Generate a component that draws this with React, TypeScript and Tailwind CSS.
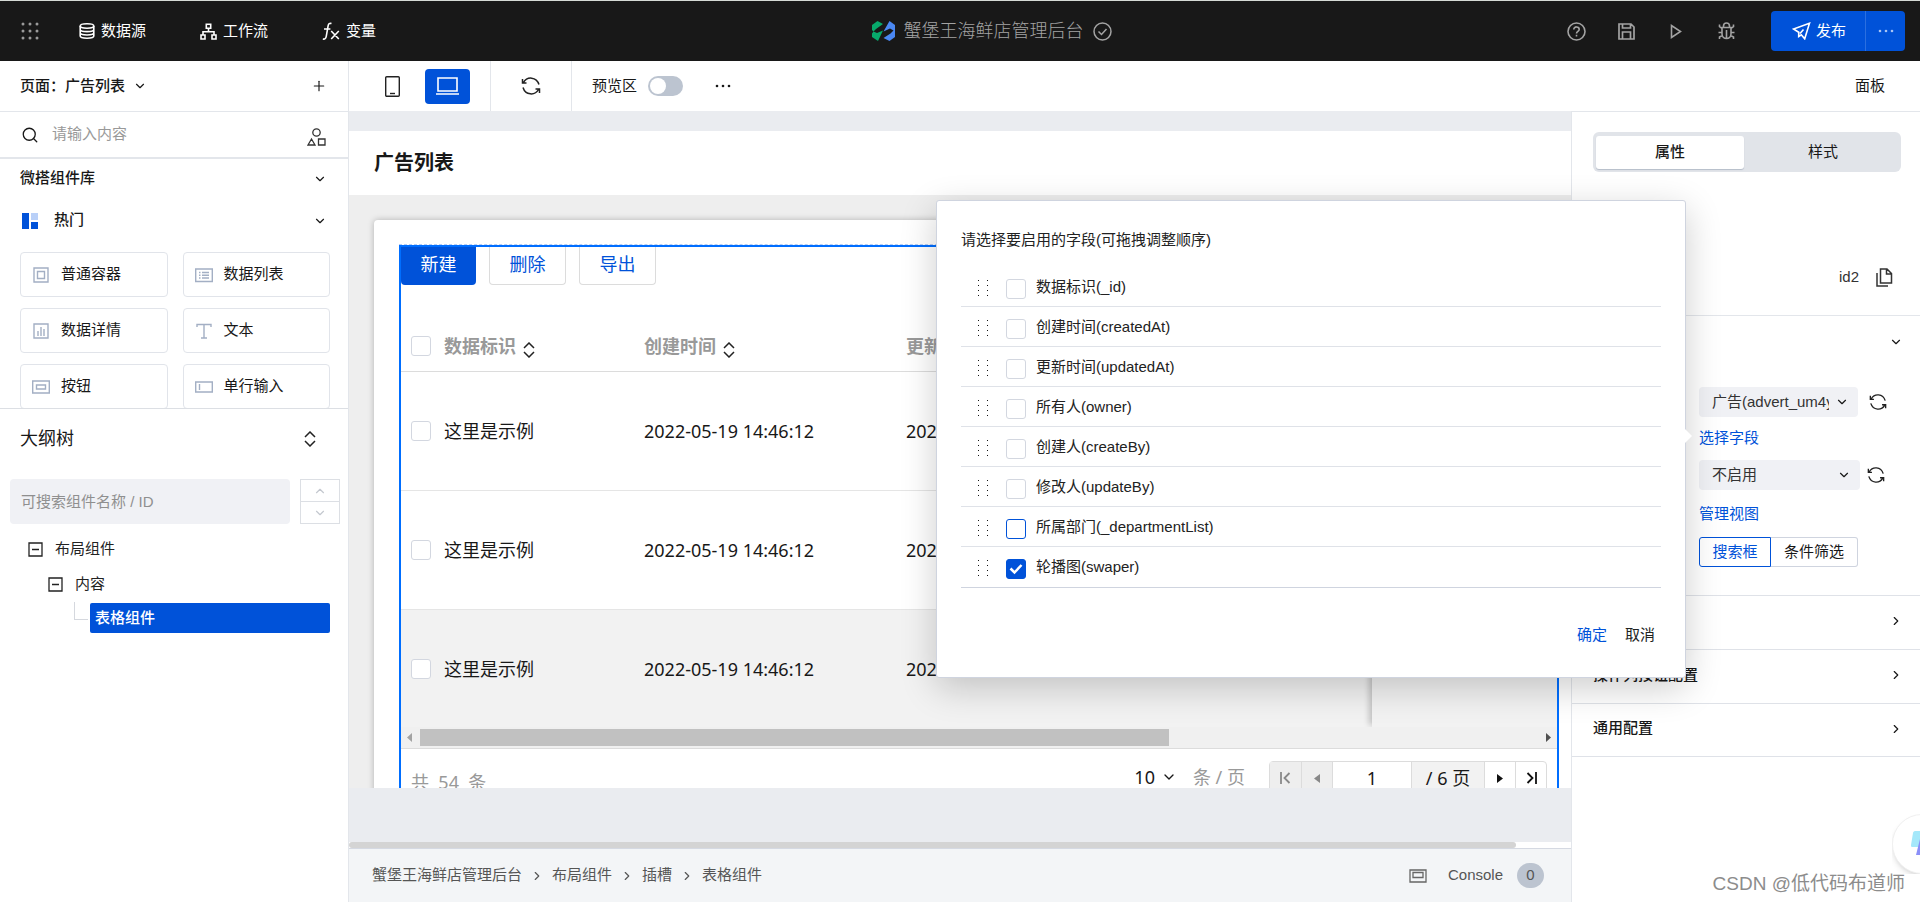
import React, { useState } from 'react';
import { ChevronDown, ChevronRight, ChevronUp, Plus, Search } from 'lucide-react';

const fields = [
  { id: '_id', label: '数据标识(_id)', enabled: false },
  { id: 'createdAt', label: '创建时间(createdAt)', enabled: false },
  { id: 'updatedAt', label: '更新时间(updatedAt)', enabled: false },
  { id: 'owner', label: '所有人(owner)', enabled: false },
  { id: 'createBy', label: '创建人(createBy)', enabled: false },
  { id: 'updateBy', label: '修改人(updateBy)', enabled: false },
  { id: '_departmentList', label: '所属部门(_departmentList)', enabled: false, hovered: true },
  { id: 'swaper', label: '轮播图(swaper)', enabled: true },
];

const rows = [
  { id: 1, name: '这里是示例', createdAt: '2022-05-19 14:46:12', updatedAt: '2022-05-19 14:46:12' },
  { id: 2, name: '这里是示例', createdAt: '2022-05-19 14:46:12', updatedAt: '2022-05-19 14:46:12' },
  { id: 3, name: '这里是示例', createdAt: '2022-05-19 14:46:12', updatedAt: '2022-05-19 14:46:12' },
];

const breadcrumbs = ['蟹堡王海鲜店管理后台', '布局组件', '插槽', '表格组件'];

/* ---------- icons ---------- */

function GridDotsIcon() {
  return (
    <svg width="18" height="18" viewBox="0 0 18 18" fill="#9a9a9a">
      {[2, 9, 16].map((y) => [2, 9, 16].map((x) => <circle key={`${x}-${y}`} cx={x} cy={y} r="1.5" />))}
    </svg>
  );
}

function DatabaseIcon() {
  return (
    <svg width="16" height="16" viewBox="0 0 16 16" fill="none" stroke="#fff" strokeWidth="1.6">
      <ellipse cx="8" cy="3" rx="6.8" ry="2.2" />
      <path d="M1.2 3v10c0 1.2 3 2.2 6.8 2.2s6.8-1 6.8-2.2V3M1.2 6.4c0 1.2 3 2.2 6.8 2.2s6.8-1 6.8-2.2M1.2 9.8c0 1.2 3 2.2 6.8 2.2s6.8-1 6.8-2.2" />
    </svg>
  );
}

function FlowIcon() {
  return (
    <svg width="17" height="17" viewBox="0 0 17 17" fill="none" stroke="#fff" strokeWidth="1.6">
      <path d="M6.3 1.3h4.4v4H6.3zM1 12h4v4H1zM12 12h4v4h-4zM8.5 5.3v3.4M3 12V8.7h11V12" />
    </svg>
  );
}

function FxIcon() {
  return (
    <svg width="18" height="19" viewBox="0 0 18 19" fill="none" stroke="#fff" strokeWidth="1.6">
      <path d="M9.5 1.5C7.6 1 6.5 1.8 6.1 3.8L4.2 14.6c-.4 2-1.4 2.8-3.4 2.4M2 7h6.4M9.2 9l7.6 8M16.8 9l-7.6 8" />
    </svg>
  );
}

function LogoIcon() {
  return (
    <svg width="23" height="20" viewBox="0 0 23 20">
      <path d="M0 4 5.500 0l5.500 3-7 5-2.500 2.500 3.500 1.500 6-2.500L6 20l-6-4v-3.500l1.500-2L0 9z" fill="#07a86b" />
      <path d="m17.500 0 5.500 4v12l-5.500 4-6-3 7-4.500 3-3-3.500-2-6.500 3z" fill="#4a87f2" />
    </svg>
  );
}

function CheckCircleIcon() {
  return (
    <svg width="19" height="19" viewBox="0 0 19 19" fill="none" stroke="#a3a3a3" strokeWidth="1.5">
      <circle cx="9.500" cy="9.500" r="8.500" />
      <path d="m5.500 9.500 3 3 5-5.500" />
    </svg>
  );
}

function HelpIcon() {
  return (
    <svg width="19" height="19" viewBox="0 0 19 19" fill="none" stroke="#a3a3a3" strokeWidth="1.6">
      <circle cx="9.500" cy="9.500" r="8.500" />
      <path d="M6.800 7.400c0-3.400 5.400-3.200 5.400 0 0 1.800-2.700 2-2.700 4M9.500 12.700v1.800" />
    </svg>
  );
}

function SaveIcon() {
  return (
    <svg width="17" height="17" viewBox="0 0 17 17" fill="none" stroke="#a3a3a3" strokeWidth="1.700">
      <path d="M1 1h12l3 3v12H1zM4.500 1v4h8V1M4.500 16V9h8v7" />
    </svg>
  );
}

function PlayIcon() {
  return (
    <svg width="12" height="15" viewBox="0 0 12 15" fill="none" stroke="#a3a3a3" strokeWidth="1.600">
      <path d="M1.500 1.500v12l9-6z" />
    </svg>
  );
}

function BugIcon() {
  return (
    <svg width="17" height="18" viewBox="0 0 17 18" fill="none" stroke="#a3a3a3" strokeWidth="1.600">
      <path d="M5.500 5V4c0-4 6-4 6 0v1M4 5.500h9V12c0 6-9 6-9 0zM8.500 8v8M4 6.500 1.500 4.500V2.500M13 6.500l2.500-2V2.500M4 10.500H.5M13 10.500h3.500M4.500 13.500l-3 1.500v2M12.500 13.500l3 1.500v2" />
    </svg>
  );
}

function SendIcon() {
  return (
    <svg width="19" height="18" viewBox="0 0 19 18" fill="none" stroke="#fff" strokeWidth="1.600">
      <path d="M17.500 1.200 1.500 7l5.200 3.300v4.200l2.600-1.700 3.400 4zM8 11.500l3.500-4" />
    </svg>
  );
}

function MoreIcon({ className }: { className?: string }) {
  return (
    <svg className={className} width="16" height="4" viewBox="0 0 16 4" fill="currentColor">
      <circle cx="2" cy="2" r="1.300" />
      <circle cx="8" cy="2" r="1.300" />
      <circle cx="14" cy="2" r="1.300" />
    </svg>
  );
}

function RefreshIcon({ size }: { size: number }) {
  return (
    <svg width={size} height={size} viewBox="0 0 20 20" fill="none" stroke="#222" strokeWidth="1.500">
      <path d="M2.500 6.500C6 .2 15.500.5 18 8.500M17.500 13.500C14 19.800 4.500 19.500 2 11.500M1.500 3v4h4M18.500 17v-4h-4" />
    </svg>
  );
}

function ShapesIcon() {
  return (
    <svg width="19" height="18" viewBox="0 0 19 18" fill="none" stroke="#333" strokeWidth="1.300">
      <circle cx="9.500" cy="4.500" r="3.700" />
      <path d="M4.500 11 8 17H1zM11.500 11H18v6h-6.500z" />
    </svg>
  );
}

function SortIcon() {
  return (
    <svg width="12" height="16" viewBox="0 0 12 16" fill="none" stroke="#222" strokeWidth="1.500">
      <path d="m1 6 5-5 5 5M1 10l5 5 5-5" />
    </svg>
  );
}

function DragIcon() {
  return (
    <svg width="12" height="18" viewBox="0 0 12 18" fill="#111" shapeRendering="crispEdges">
      {[1, 6, 11, 16].map((y) => (
        <path key={y} d={`M1 ${y}h1v1H1zM10 ${y}h1v1h-1z`} />
      ))}
    </svg>
  );
}

function CopyIcon() {
  return (
    <svg width="17" height="19" viewBox="0 0 17 19" fill="none" stroke="#333" strokeWidth="1.500">
      <path d="M4.500 1H11l4.500 4.500V15h-11zM10.500 1v5h5M1 5v13h11" />
    </svg>
  );
}

function TreeBoxIcon() {
  return (
    <svg width="15" height="15" viewBox="0 0 15 15" fill="none" stroke="#222" strokeWidth="1.300">
      <path d="M1 1h13v13H1zM4 7.500h7" />
    </svg>
  );
}

const componentIcons: Record<string, React.ReactNode> = {
  普通容器: <path d="M2 1h14v14H2zM5.500 4.500h7v7h-7z" />,
  数据列表: <path d="M.7 2h16.600v12.500H.7zM4 5.500h1.500M7 5.500h7M4 8.300h1.500M7 8.300h7M4 11h1.500M7 11h7" />,
  数据详情: <path d="M2 1h14v14H2zM6 8v5M9 4v9M12 6v7" />,
  文本: <path d="M2 4V1.500h14V4M9 1.500V15M6 15h6" />,
  按钮: <path d="M.7 2h16.600v12H.7zM4.500 6h9v4h-9z" />,
  单行输入: <path d="M.7 3h16.600v10H.7zM4.500 5v6" />,
};

/* ---------- shared controls ---------- */

function Checkbox({ label, id, checked = false, hovered = false }: { label?: string; id: string; checked?: boolean; hovered?: boolean }) {
  const [on, setOn] = useState(checked);
  return (
    <span className="relative block size-5">
      <input
        type="checkbox"
        id={id}
        aria-label={label}
        checked={on}
        onChange={(e) => setOn(e.target.checked)}
        className={`block size-5 appearance-none rounded-[3px] border bg-white checked:border-[#0052d9] checked:bg-[#0052d9] ${hovered ? 'border-[#0052d9]' : 'border-[#d3d7e0]'}`}
      />
      {on && (
        <svg className="pointer-events-none absolute inset-0" width="20" height="20" viewBox="0 0 20 20" fill="none" stroke="#fff" strokeWidth="2.500">
          <path d="m4.500 9.500 4 4 7-7.500" />
        </svg>
      )}
    </span>
  );
}

function Header() {
  return (
    <header className="flex h-[61px] shrink-0 items-center border-t border-[#d5dad5] bg-[#181818] pl-[21px] pr-[15px] text-white">
      <nav className="flex w-[411px] shrink-0 items-center">
        <button aria-label="应用">
          <GridDotsIcon />
        </button>
        <a href="#data" className="ml-10 flex items-center gap-[6px]">
          <DatabaseIcon />
          数据源
        </a>
        <a href="#flow" className="ml-[54px] flex items-center gap-[6px]">
          <FlowIcon />
          工作流
        </a>
        <a href="#vars" className="ml-[54px] flex items-center gap-[6px]">
          <FxIcon />
          变量
        </a>
      </nav>
      <div className="flex flex-1 items-center justify-center gap-[9px]">
        <LogoIcon />
        <h1 className="text-lg font-light text-[#a3a3a3]">蟹堡王海鲜店管理后台</h1>
        <CheckCircleIcon />
      </div>
      <div className="flex shrink-0 items-center">
        <button aria-label="帮助" className="flex w-[50px] justify-center"><HelpIcon /></button>
        <button aria-label="保存" className="flex w-[50px] justify-center"><SaveIcon /></button>
        <button aria-label="预览" className="flex w-[50px] justify-center"><PlayIcon /></button>
        <button aria-label="调试" className="flex w-[50px] justify-center"><BugIcon /></button>
        <div className="ml-5 flex h-10 overflow-hidden rounded-[4px] bg-[#0052d9]">
          <button className="flex w-[94px] items-center justify-center gap-[5px] pl-[2px]">
            <SendIcon />
            发布
          </button>
          <button aria-label="更多" className="flex w-10 items-center justify-center border-l border-[#2b6fe0] text-[#a9c5f5]">
            <MoreIcon />
          </button>
        </div>
      </div>
    </header>
  );
}

function LeftPanel() {
  return (
    <aside className="flex w-[349px] shrink-0 flex-col border-r border-[#e3e6eb] bg-white">
      <div className="flex h-[51px] shrink-0 items-center border-b border-[#e3e6eb] pl-5 pr-[21px]">
        <button className="flex items-center gap-2 font-medium">
          页面：广告列表
          <ChevronDown size={14} />
        </button>
        <button aria-label="新建页面" className="ml-auto">
          <Plus size={16} strokeWidth={1.75} />
        </button>
      </div>
      <div className="flex h-[47px] shrink-0 items-center border-b-2 border-[#e3e6eb] pl-[21px] pr-[22px]">
        <Search size={18} strokeWidth={1.75} />
        <input aria-label="搜索组件" placeholder="请输入内容" className="ml-[13px] min-w-0 flex-1 outline-none placeholder:text-[#999]" />
        <button aria-label="组件分类" className="pt-1">
          <ShapesIcon />
        </button>
      </div>

      <section className="h-[250px] shrink-0 overflow-hidden border-b border-[#dcdfe4]">
        <button className="flex h-[39px] w-full items-center justify-between pl-5 pr-[21px] font-medium">
          微搭组件库
          <ChevronDown size={14} />
        </button>
        <button className="flex h-[45px] w-full items-center pl-[22px] pr-[21px] font-medium">
          <svg width="16" height="16" viewBox="0 0 16 16">
            <path d="M0 0h7v16H0z" fill="#0052d9" />
            <path d="M9 0h7v7H9z" fill="#b9d0f8" />
            <path d="M9 9h7v7H9z" fill="#0052d9" />
          </svg>
          <span className="ml-4">热门</span>
          <ChevronDown size={14} className="ml-auto" />
        </button>
        <div className="mt-[9px] grid grid-cols-2 gap-x-[15px] gap-y-[11px] pl-5 pr-[18px]">
          {Object.keys(componentIcons).map((name) => (
            <button key={name} className="flex h-[45px] items-center gap-[11px] rounded-[4px] border border-[#e1e4ea] pl-[11px]">
              <svg width="18" height="16" viewBox="0 0 18 16" fill="none" stroke="#a3afc4" strokeWidth="1.400">
                {componentIcons[name]}
              </svg>
              {name}
            </button>
          ))}
        </div>
      </section>

      <section className="flex-1 overflow-hidden">
        <div className="flex h-[60px] items-center justify-between pl-5 pr-8">
          <h2 className="text-lg">大纲树</h2>
          <button aria-label="展开">
            <SortIcon />
          </button>
        </div>
        <div className="mt-[10px] flex gap-[10px] pl-[10px] pr-2">
          <input aria-label="搜索大纲" placeholder="可搜索组件名称 / ID" className="h-[45px] min-w-0 flex-1 rounded-[4px] bg-[#f0f1f5] px-[11px] outline-none placeholder:text-[#8f8f8f]" />
          <div className="flex h-[45px] w-10 flex-col border border-[#dcdfe4] text-[#c4c8cf]">
            <button aria-label="上一个" className="flex flex-1 items-center justify-center border-b border-[#dcdfe4]">
              <ChevronUp size={14} />
            </button>
            <button aria-label="下一个" className="flex flex-1 items-center justify-center">
              <ChevronDown size={14} />
            </button>
          </div>
        </div>
        <ul className="mt-2 pr-[18px] text-[#222]">
          <li className="flex h-[35px] items-center gap-3 pl-7">
            <TreeBoxIcon />
            布局组件
          </li>
          <li className="flex h-[35px] items-center gap-3 pl-12">
            <TreeBoxIcon />
            内容
          </li>
          <li className="flex h-[35px] items-start pl-[74px]">
            <span className="h-[18px] w-[14px] border-b border-l border-[#d5d8de]" />
            <span className="ml-[2px] mt-px flex h-[30px] flex-1 items-center rounded-[2px] bg-[#0052d9] pl-[5px] font-medium text-white">表格组件</span>
          </li>
        </ul>
      </section>
    </aside>
  );
}

function Toolbar() {
  return (
    <div className="flex h-[50px] shrink-0 items-center bg-white">
      <button aria-label="手机" className="ml-9">
        <svg width="15" height="21" viewBox="0 0 15 21" fill="none" stroke="#222" strokeWidth="1.400">
          <rect x=".7" y=".7" width="13.600" height="19.600" rx="1" />
          <path d="M5 17.500h5" />
        </svg>
      </button>
      <button aria-label="电脑" className="ml-[25px] flex h-[35px] w-[45px] items-center justify-center rounded-[4px] bg-[#0052d9]">
        <svg width="23" height="18" viewBox="0 0 23 18" fill="none" stroke="#fff" strokeWidth="1.600">
          <path d="M2 1h19v13H2zM0 17h23" />
        </svg>
      </button>
      <div className="ml-5 flex h-full w-[82px] items-center justify-center border-x border-[#e3e6eb]">
        <button aria-label="刷新">
          <RefreshIcon size={20} />
        </button>
      </div>
      <label className="ml-5 flex items-center gap-[11px]">
        预览区
        <input
          type="checkbox"
          role="switch"
          className="h-5 w-[35px] appearance-none rounded-full bg-[#bcc4d0] p-[2px] before:block before:size-4 before:rounded-full before:bg-white checked:bg-[#0052d9] checked:before:ml-auto"
        />
      </label>
      <button aria-label="更多" className="ml-8">
        <MoreIcon />
      </button>
    </div>
  );
}

function DataTable() {
  return (
    <div className="min-h-[600px] border-2 border-[#006eff] font-[family-name:'Noto_Sans','Noto_Sans_CJK_SC',sans-serif] text-lg">
      <div className="flex h-[38px] gap-[13px] [&>button]:pb-1">
        <button className="w-[75px] rounded-b-[4px] bg-[#0052d9] text-white">新建</button>
        <button className="w-[77px] rounded-b-[4px] border border-t-0 border-[#dcdcdc] text-[#0052d9]">删除</button>
        <button className="w-[77px] rounded-b-[4px] border border-t-0 border-[#dcdcdc] text-[#0052d9]">导出</button>
      </div>
      <table className="mt-9 w-full table-fixed border-separate border-spacing-0 text-left">
        <colgroup>
          <col className="w-[43px]" />
          <col className="w-[200px]" />
          <col className="w-[262px]" />
          <col />
          <col className="w-[185px]" />
        </colgroup>
        <thead className="text-[#999]">
          <tr className="h-[51px]">
            <th className="border-b border-[#dcdcdc] pl-[10px]">
              <Checkbox id="row-all" label="全选" />
            </th>
            {['数据标识', '创建时间', '更新时间'].map((title) => (
              <th key={title} className="border-b border-[#dcdcdc] font-bold">
                <button className="flex items-center gap-[7px]">
                  {title}
                  <span className="pt-2">
                    <SortIcon />
                  </span>
                </button>
              </th>
            ))}
            <th className="border-b border-[#dcdcdc] shadow-[-5px_0_6px_-2px_rgba(0,0,0,0.15)]" />
          </tr>
        </thead>
        <tbody>
          {rows.map((row) => (
            <tr key={row.id} className="group h-[119px] last:h-[117px] last:bg-[#f2f2f2]">
              <td className="border-b border-[#e5e5e5] pl-[10px] group-last:border-0">
                <Checkbox id={`row-${row.id}`} label={`选择第${row.id}行`} />
              </td>
              <td className="border-b border-[#e5e5e5] group-last:border-0">{row.name}</td>
              <td className="border-b border-[#e5e5e5] group-last:border-0">{row.createdAt}</td>
              <td className="border-b border-[#e5e5e5] group-last:border-0">{row.updatedAt}</td>
              <td className="border-b border-[#e5e5e5] shadow-[-5px_0_6px_-2px_rgba(0,0,0,0.2)] group-last:border-0" />
            </tr>
          ))}
        </tbody>
      </table>
      <div className="relative flex h-[22px] items-center border-b border-[#dcdcdc] bg-[#f0f0f0] px-[6px]">
        <svg width="5" height="9" viewBox="0 0 5 9" fill="#a3a3a3"><path d="M5 0v9L0 4.500z" /></svg>
        <div className="mx-2 flex-1">
          <div className="h-[17px] w-[67%] bg-[#c1c1c1]" />
        </div>
        <svg width="5" height="9" viewBox="0 0 5 9" fill="#505050"><path d="M0 0v9l5-4.500z" /></svg>
      </div>
      <div className="flex items-start px-[10px] pt-3">
        <span className="pt-[7px] text-[#999]">共&nbsp; 54 &nbsp;条</span>
        <button className="ml-auto flex h-8 items-center gap-[6px]">
          10
          <ChevronDown size={16} />
        </button>
        <span className="ml-4 flex h-8 items-center text-[#999]">条 / 页</span>
        <div className="ml-6 flex h-10 rounded-[4px] border border-[#dcdcdc] [&>*]:h-8 [&>*+*]:border-l [&>*+*]:border-[#dcdcdc]">
          <button disabled aria-label="首页" className="flex w-[31px] items-center justify-center bg-[#eee]">
            <svg width="11" height="12" viewBox="0 0 11 12" fill="none" stroke="#888" strokeWidth="1.800"><path d="M1 0v12M9.500 1 4.500 6l5 5" /></svg>
          </button>
          <button disabled aria-label="上一页" className="flex w-[31px] items-center justify-center bg-[#eee]">
            <svg width="6" height="9" viewBox="0 0 6 9" fill="#888"><path d="M6 0v9L0 4.500z" /></svg>
          </button>
          <input aria-label="页码" defaultValue="1" className="w-[79px] text-center outline-none" />
          <span className="flex w-[73px] items-center justify-center bg-[#f2f2f2]">/ 6 页</span>
          <button aria-label="下一页" className="flex w-[31px] items-center justify-center">
            <svg width="6" height="9" viewBox="0 0 6 9" fill="#111"><path d="M0 0v9l6-4.500z" /></svg>
          </button>
          <button aria-label="末页" className="flex w-[31px] items-center justify-center">
            <svg width="11" height="12" viewBox="0 0 11 12" fill="none" stroke="#111" strokeWidth="1.800"><path d="M10 0v12M1.500 1l5 5-5 5" /></svg>
          </button>
        </div>
      </div>
    </div>
  );
}

function Workspace() {
  return (
    <main className="flex min-w-0 flex-1 flex-col">
      <Toolbar />
      <div className="flex min-h-0 flex-1 flex-col bg-[#eaecf0] pb-[54px] pt-5">
        <div className="flex min-h-0 flex-1 flex-col overflow-hidden bg-[#eee]">
          <div className="flex h-16 shrink-0 items-center bg-white pl-[25px]">
            <h2 className="text-xl font-bold">广告列表</h2>
          </div>
          <div className="ml-[25px] mt-[25px] rounded-tl-[4px] bg-white pl-[25px] pr-3 pt-6 shadow-[0_0_6px_rgba(0,0,0,0.25)]">
            <div className="border-t border-dashed border-[#b5cdf5]">
              <DataTable />
            </div>
          </div>
        </div>
      </div>
      <div className="h-[6px] shrink-0 bg-white pr-[55px]">
        <div className="h-full rounded-full bg-[#d4d4d4]" />
      </div>
      <footer className="flex h-[54px] shrink-0 items-center border-t border-[#d5d9e2] bg-[#f3f5f7] pl-[23px] pr-[27px] text-[#555]">
        {breadcrumbs.map((item, i) => (
          <React.Fragment key={item}>
            {i > 0 && <ChevronRight size={14} className="mx-2" />}
            <a href="#node">{item}</a>
          </React.Fragment>
        ))}
        <svg className="ml-auto" width="18" height="14" viewBox="0 0 18 14" fill="none" stroke="#666" strokeWidth="1.300">
          <path d="M1 1h16v12H1zM4 3.500h10v5H4z" />
        </svg>
        <button className="ml-[21px] flex items-center gap-[14px]">
          Console
          <span className="flex h-[25px] w-[27px] items-center justify-center rounded-full bg-[#bcc4d0] text-[#555]">0</span>
        </button>
      </footer>
    </main>
  );
}

function FieldPopover() {
  return (
    <div
      role="dialog"
      aria-label="选择字段"
      className="absolute right-full top-[-226px] z-20 mr-[13px] w-[750px] rounded-[3px] border border-[#cfd4df] bg-white px-6 pb-[30px] pt-[27px] text-[#222] shadow-[0_10px_36px_rgba(0,0,0,0.2)]"
    >
      <p className="flex h-6 items-center">请选择要启用的字段(可拖拽调整顺序)</p>
      <ul className="mt-[15px] border-b border-[#cfd4df]">
        {fields.map((field) => (
          <li key={field.id} className="flex h-10 items-center border-b border-[#dfe2e8] pl-4 last:border-transparent">
            <span className="pt-[2px]">
              <DragIcon />
            </span>
            <span className="ml-[17px] pt-[5px]">
              <Checkbox id={field.id} checked={field.enabled} hovered={field.hovered} />
            </span>
            <label htmlFor={field.id} className="ml-[10px] pt-[2px]">{field.label}</label>
          </li>
        ))}
      </ul>
      <div className="mt-[35px] flex h-6 items-center justify-end gap-[18px] pr-[6px]">
        <button className="text-[#0052d9]">确定</button>
        <button>取消</button>
      </div>
      <svg className="absolute left-full top-[228px]" width="7" height="14" viewBox="0 0 7 14">
        <path d="M0 0v14l7-7z" fill="#fff" />
      </svg>
    </div>
  );
}

function SelectBox({ id, label, value, className }: { id: string; label: string; value: string; className: string }) {
  return (
    <span className={`relative block h-[30px] ${className}`}>
      <select id={id} aria-label={label} className="h-full w-full appearance-none overflow-hidden rounded-[4px] bg-[#f0f1f5] pl-[13px] pr-[29px] text-[#333] outline-none">
        <option>{value}</option>
      </select>
      <ChevronDown size={14} className="pointer-events-none absolute right-[9px] top-2" />
    </span>
  );
}

function RightPanel() {
  return (
    <aside className="relative z-10 flex w-[349px] shrink-0 flex-col bg-white">
      <div className="flex h-[51px] shrink-0 items-center justify-end border-b border-[#e3e6eb] pr-[35px]">
        <button>面板</button>
      </div>
      <div className="flex-1 border-l border-[#e3e6eb]">
        <div className="ml-[21px] mr-[19px] mt-5 flex h-10 rounded-[6px] bg-[#e1e4e9] px-[3px] py-1" role="tablist">
          <button role="tab" aria-selected="true" className="h-[33px] w-[148px] rounded-[3px] bg-white font-medium shadow-[0_1px_1px_#b5bdc9]">属性</button>
          <button role="tab" aria-selected="false" className="h-[33px] flex-1 pl-1">样式</button>
        </div>
        <div className="mt-[89px] flex h-[33px] items-center justify-end gap-[17px] pr-[27px] text-[#333]">
          id2
          <button aria-label="复制">
            <CopyIcon />
          </button>
        </div>
        <div className="mt-[21px] border-t border-[#e3e6eb]">
          <button aria-label="收起" className="flex h-[51px] w-full items-center justify-end pr-[17px]">
            <ChevronDown size={14} />
          </button>
          <div className="pb-7 pl-[127px] pt-5">
            <div className="flex items-center gap-[11px]">
              <SelectBox id="source" label="数据源" value="广告(advert_um4y)" className="w-[159px]" />
              <button aria-label="刷新数据源"><RefreshIcon size={18} /></button>
            </div>
            <div className="relative mt-[9px] flex h-6 items-center">
              <a href="#fields" className="text-[#0052d9]">选择字段</a>
              <FieldPopover />
            </div>
            <div className="mt-[10px] flex items-center gap-[7px]">
              <SelectBox id="view" label="视图" value="不启用" className="w-[161px]" />
              <button aria-label="刷新视图"><RefreshIcon size={18} /></button>
            </div>
            <a href="#views" className="mt-3 flex h-6 items-center text-[#0052d9]">管理视图</a>
            <div className="mt-[11px] flex h-[30px]">
              <button className="w-[72px] rounded-l-[3px] border border-[#0052d9] text-[#0052d9]">搜索框</button>
              <button className="w-[87px] rounded-r-[3px] border border-l-0 border-[#cfd4df]">条件筛选</button>
            </div>
          </div>
        </div>
        {['', '操作列按钮配置', '通用配置'].map((title) => (
          <button key={title} aria-label={title || '更多配置'} className="flex h-[54px] w-full items-center border-t border-[#dfe2e8] pb-[3px] pl-[21px] pr-[17px] font-medium last:border-b">
            {title}
            <ChevronRight size={14} className="ml-auto" />
          </button>
        ))}
      </div>
      <div className="absolute bottom-7 right-0 h-[60px] w-7 overflow-hidden">
        <div className="flex size-[60px] items-center rounded-full border border-[#f0f0f0] bg-white pl-[18px] shadow-md">
          <svg width="26" height="26" viewBox="0 0 26 26">
            <path d="M4 0h12v16H1c-1 0-1-1-1-2L2 2c0-1 1-2 2-2z" fill="#a5e8fa" />
            <path d="M9 8h14v16H5z" fill="#8b8ff8" />
          </svg>
        </div>
      </div>
      <p className="absolute bottom-1 right-[15px] text-[19px] text-[#8c8c8c]">CSDN @低代码布道师</p>
    </aside>
  );
}

export default function App() {
  return (
    <div className="flex h-screen flex-col overflow-hidden bg-white font-[family-name:'Liberation_Sans','Noto_Sans_CJK_SC',sans-serif] text-[15px] text-[#181818]">
      <Header />
      <div className="flex min-h-0 flex-1">
        <LeftPanel />
        <Workspace />
        <RightPanel />
      </div>
    </div>
  );
}
